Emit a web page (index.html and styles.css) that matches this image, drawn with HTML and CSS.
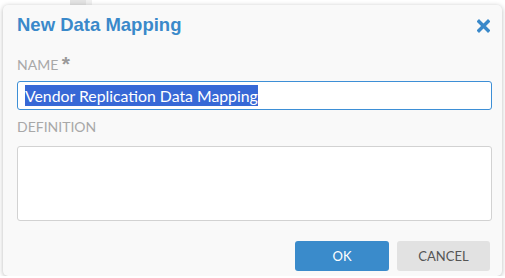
FILE: index.html
```html
<!DOCTYPE html>
<html lang="en">
<head>
  <meta charset="UTF-8" />
  <title>New Data Mapping</title>
  <link rel="stylesheet" href="styles.css">
</head>
<body>

  <div class="dialog">
    <div class="dialog-header">
      <h2 class="title">New Data Mapping</h2>
      <svg class="close" width="13" height="14" viewBox="0 0 13 14">
        <path d="M2 2.5 L11 11.5 M11 2.5 L2 11.5" stroke="#3a89ca" stroke-width="3.4" stroke-linecap="square" fill="none"/>
      </svg>
    </div>

    <div class="label name-label">NAME <span class="required">*</span></div>
    <div class="field"><span class="selected">Vendor Replication Data Mapping</span></div>

    <div class="label def-label">DEFINITION</div>
    <div class="textarea"></div>

    <div class="footer">
      <button class="btn btn-ok">OK</button>
      <button class="btn btn-cancel">CANCEL</button>
    </div>
  </div>

</body>
</html>
```

FILE: styles.css
```css
* {
  box-sizing: border-box;
}

body {
  margin: 0;
  padding: 5px 3px 0;
  background-color: #fff;
  background-image: linear-gradient(#e3e3e3, #e3e3e3), linear-gradient(#f0f0f0, #f0f0f0);
  background-position: 70px 0, 86px 0;
  background-size: 16px 6px, 6px 6px;
  background-repeat: no-repeat;
  font-family: Lato, "Open Sans", sans-serif;
}

.dialog {
  width: 499px;
  height: 271px;
  background: #f9f9f9;
  border-radius: 5px;
  box-shadow: 0 1px 5px rgba(0, 0, 0, 0.28);
  padding: 9px 10px 5px 14px;
  display: flex;
  flex-direction: column;
}

.dialog-header {
  display: flex;
  justify-content: space-between;
  align-items: flex-start;
}

.title {
  margin: 0;
  font: bold 18.5px "Liberation Sans", Arial, sans-serif;
  line-height: 21px;
  color: #3a89ca;
}

.close {
  margin-top: 5px;
  margin-right: 2px;
}

.label {
  font-size: 14px;
  line-height: 17px;
  color: #a8a8a8;
}

.name-label {
  margin-top: 21px;
}

.required {
  font: bold 21px "Liberation Sans", Arial, sans-serif;
  line-height: 0;
  color: #9a9a9a;
  vertical-align: -1px;
}

.field {
  margin-top: 8px;
  height: 29px;
  background: #fff;
  border: 1px solid #3d8fd6;
  border-radius: 3px;
  padding: 3px 7px;
}

.selected {
  display: inline-block;
  font-size: 15.8px;
  line-height: 21px;
  background: #3768d6;
  color: #fff;
}

.def-label {
  margin-top: 8px;
}

.textarea {
  margin-top: 11px;
  height: 75px;
  background: #fff;
  border: 1px solid #d2d2d2;
  border-radius: 3px;
}

.footer {
  margin-top: 20px;
  margin-right: 2px;
  display: flex;
  justify-content: flex-end;
  gap: 8px;
}

.btn {
  height: 30px;
  border: none;
  border-radius: 3px;
  font-family: Lato, "Open Sans", sans-serif;
  font-size: 13px;
  cursor: pointer;
}

.btn-ok {
  width: 94px;
  background: #3a8bcb;
  color: #fff;
}

.btn-cancel {
  width: 93px;
  background: #e2e2e2;
  color: #555;
}
```
